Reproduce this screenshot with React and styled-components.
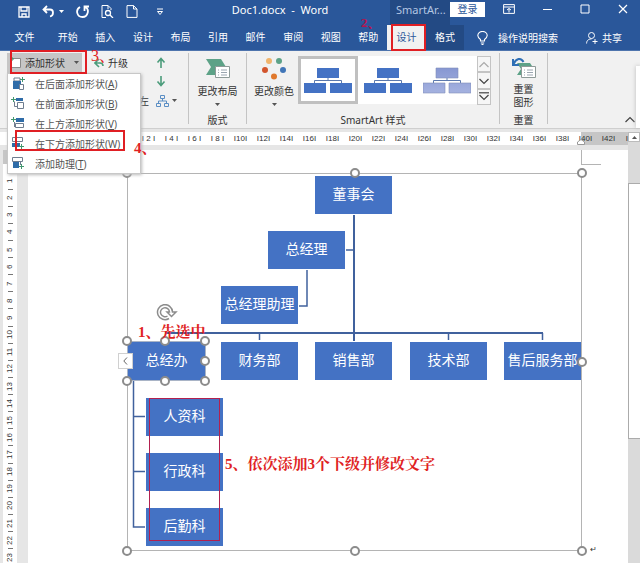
import styled, { createGlobalStyle } from 'styled-components';

const GlobalStyle = createGlobalStyle`
  * {
    box-sizing: border-box;
  }

  body {
    --color-word: #2a579a;
    --color-word-dark: #234a84;
    --color-shape: #4472c4;
    --color-line: #40619d;
    --color-mark: #e01f24;
    --ff-ui: 'Noto Sans', 'Noto Sans CJK SC', sans-serif;
    --ff-note: 'Liberation Serif', 'Noto Serif CJK SC', 'Noto Sans CJK SC', serif;
    margin: 0;
    font-family: var(--ff-ui);
    font-size: 10px;
    color: #333;
  }

  button {
    margin: 0;
    padding: 0;
    border: 0;
    background: none;
    color: inherit;
    font: inherit;
    white-space: nowrap;
  }

  svg {
    display: block;
    flex: none;
  }
`;

const StyledWindow = styled.div`
  display: flex;
  flex-direction: column;
  min-height: 100vh;
  background: #e6e6e6;
  overflow: hidden;
`;

const StyledTitleBar = styled.header`
  display: grid;
  grid-template-columns: auto 1fr auto;
  height: 25px;
  background: var(--color-word);
  color: #fff;

  .quick {
    display: flex;
    align-items: center;
    gap: 12px;
    padding: 0 0 2px 18px;
  }

  .undo {
    display: flex;
    align-items: center;
    gap: 4px;
  }

  h1 {
    margin: 0;
    font-size: 11px;
    font-weight: 400;
    line-height: 20px;
    text-align: center;
    white-space: pre;
  }

  .right {
    display: flex;
    justify-content: flex-end;
    align-items: flex-start;
  }

  .context {
    width: 60px;
    height: 25px;
    padding-left: 6px;
    background: var(--color-word-dark);
    color: #b4c6e2;
    font-size: 11px;
    line-height: 20px;
  }

  .login {
    width: 35px;
    height: 15px;
    margin: 2px 18px 0 0;
    background: #fff;
    color: var(--color-word);
    line-height: 15px;
  }

  .controls {
    display: flex;
    gap: 28px;
    padding: 4px 12px 0 0;
  }
`;

const StyledTabs = styled.nav`
  position: relative;
  display: flex;
  height: 25px;
  background: var(--color-word);
  color: #fff;

  .main {
    display: flex;
    flex: 0 1 338px;
  }

  .tools {
    display: flex;
    flex: 1;
    align-items: center;
    justify-content: space-between;
    padding: 0 18px 0 13px;
  }

  .tools button {
    display: flex;
    align-items: center;
    gap: 10px;
  }

  .tools button:last-child {
    gap: 4px;
  }
`;

const StyledTab = styled.button`
  flex: ${({ $width }) => ($width ? `0 0 ${$width}px` : '1')};
  position: relative;
  line-height: 25px;
  background: ${({ $tone }) => $tone || 'none'};
  color: ${({ $active }) => ($active ? 'var(--color-word)' : '#fff')};
`;

const StyledMark = styled.span`
  position: absolute;
  top: ${({ $top }) => $top}px;
  left: ${({ $left }) => $left}px;
  width: ${({ $width }) => $width}px;
  height: ${({ $height }) => $height}px;
  border: ${({ $thin }) => ($thin ? 1 : 2)}px solid ${({ $color }) => $color || 'var(--color-mark)'};
  pointer-events: none;
  z-index: 4;
`;

const StyledNote = styled.span`
  position: absolute;
  top: ${({ $top }) => $top}px;
  left: ${({ $left }) => $left}px;
  color: ${({ $color }) => $color || 'var(--color-mark)'};
  font-family: var(--ff-note);
  font-size: ${({ $size }) => $size || 15}px;
  font-weight: ${({ $weight }) => $weight || 700};
  line-height: 20px;
  white-space: nowrap;
  pointer-events: none;
  z-index: 4;
`;

const StyledRibbon = styled.section`
  position: relative;
  display: flex;
  height: 79px;
  padding: 2px 0 4px;
  border-top: 1px solid #4e74ad;
  border-bottom: 1px solid #cfcfcf;
  background: #f1f1f1;

  .collapse {
    margin: auto 5px 0 auto;
  }

  .pane {
    position: absolute;
    top: 15px;
    right: 0;
    bottom: 0;
    width: 4px;
    background: #fff;
    box-shadow: 0 0 4px #bbb;
  }
`;

const StyledGroup = styled.div`
  position: relative;
  display: flex;
  flex: 0 0 ${({ $width }) => $width}px;
  flex-direction: column;
  align-items: center;
  justify-content: space-between;
  border-right: 1px solid #c4c4c4;

  .label {
    color: #333;
    line-height: 8px;
  }
`;

const StyledCreate = styled.div`
  display: grid;
  grid-template-columns: 75px 1fr 16px 16px;
  grid-template-rows: repeat(3, 19px);
  align-items: center;
  width: 100%;
  padding-left: 7px;

  .add {
    display: flex;
    align-items: center;
    gap: 4px;
    height: 20px;
    padding-left: 3px;
    background: #c6c6c6;
  }

  .add svg:last-child {
    margin-left: 5px;
  }

  .promote {
    display: flex;
    align-items: center;
    gap: 4px;
    padding-left: 12px;
  }

  .direction {
    grid-column: 1 / 3;
    padding-right: 7px;
    text-align: right;
  }
`;

const StyledMenu = styled.ul`
  position: absolute;
  top: 20px;
  left: 7px;
  width: 134px;
  margin: 0;
  padding: 0;
  border: 1px solid #c8c8c8;
  background: #fff;
  box-shadow: 1px 1px 3px #bbb;
  list-style: none;
  z-index: 3;

  li {
    display: flex;
    height: 20px;
  }

  li:first-child {
    height: 19px;
  }

  button {
    display: flex;
    flex: 1;
    align-items: center;
    gap: 10px;
    padding-left: 3px;
    color: #555;
  }
`;

const StyledBigButton = styled.button`
  display: flex;
  flex-direction: column;
  align-items: center;
  padding-top: 4px;
  line-height: 13px;

  svg + span {
    margin: ${({ $tight }) => ($tight ? '3px' : '5px')} 0;
    white-space: pre-line;
  }
`;

const StyledStyles = styled.div`
  display: flex;
  align-items: flex-start;
  align-self: stretch;
  padding: 0 8px 0 7px;

  .gallery {
    display: flex;
    flex: 1;
    margin: 3px 0 0 4px;
    background: #fff;
  }

  .arrows {
    display: grid;
    grid-template-rows: repeat(3, 1fr);
    width: 14px;
    height: 49px;
    margin-top: 3px;
  }

  .arrows button {
    display: grid;
    place-items: center;
    border: 1px solid #c4c4c4;
    background: #f6f6f6;
  }
`;

const StyledPreview = styled.button`
  display: grid;
  place-items: center;
  flex: 1;
  height: 48px;
  border: 3px solid ${({ $selected }) => ($selected ? '#c0c0c0' : 'transparent')};
`;

const StyledWorkspace = styled.main`
  display: flex;
  flex: 1;
  padding-top: 3px;

  .editor {
    display: flex;
    flex: 1;
    flex-direction: column;
    min-width: 0;
  }

  .sheet-row {
    display: flex;
    flex: 1;
    margin-top: 5px;
  }
`;

const StyledRuler = styled.div`
  position: relative;
  display: flex;
  height: 13px;
  padding-left: 137px;
  background: linear-gradient(to left, #c6c6c6 47px, #fff 47px);
  color: #333;
  font-family: 'Liberation Sans', sans-serif;
  font-size: 8px;
  line-height: 14px;
  white-space: nowrap;
  overflow: hidden;

  span {
    flex: 0 0 23px;
    text-align: center;
  }

  span:last-of-type {
    flex-basis: 8px;
    text-align: right;
  }

  svg {
    position: absolute;
    right: 43px;
    bottom: 0;
  }
`;

const StyledSideRuler = styled.div`
  display: flex;
  flex-direction: column;
  justify-content: space-between;
  width: 14px;
  margin: 0 11px 0 3px;
  padding: 25px 0 0;
  background: linear-gradient(#c6c6c6 14px, #fff 14px);
  color: #333;
  font-family: 'Liberation Sans', sans-serif;
  font-size: 8px;

  span {
    height: 11px;
    line-height: 14px;
    text-align: center;
    writing-mode: vertical-rl;
    transform: rotate(180deg);
  }

  i {
    width: 5px;
    height: 1px;
    margin: 0 auto;
    background: #777;
  }
`;

const StyledPage = styled.article`
  position: relative;
  flex: 1;
  padding: 23px 46px 12px 99px;
  background: #fff;

  .corner {
    position: absolute;
    top: 0;
    right: 27px;
    width: 20px;
    height: 15px;
    border: solid #b4b4b4;
    border-width: 0 0 1px 1px;
  }

  .return {
    position: absolute;
    top: 394px;
    right: 31px;
    font-size: 8px;
    line-height: 10px;
  }
`;

const StyledCanvas = styled.div`
  position: relative;
  height: 378px;
  border: 1px solid #b4b4b4;

  .lines {
    position: absolute;
    top: -1px;
    left: -1px;
  }

  .rotate {
    position: absolute;
    top: 130px;
    left: 28px;
  }

  .toggle {
    position: absolute;
    top: 179px;
    left: -10px;
    width: 15px;
    height: 16px;
    border: 1px solid #d0d0d0;
    background: #fff;
    display: grid;
    place-items: center;
  }
`;

const StyledNode = styled.div`
  position: absolute;
  top: ${({ $top }) => $top}px;
  left: ${({ $left }) => $left}px;
  width: 77px;
  height: 38px;
  background: var(--color-shape);
  color: #fff;
  font-size: 14px;
  line-height: 36px;
  text-align: center;
  white-space: nowrap;
  outline: ${({ $selected }) => ($selected ? '1px solid #a9b4c6' : 'none')};
`;

const StyledHandle = styled.span`
  position: absolute;
  top: ${({ $y }) => $y - 6}px;
  left: ${({ $x }) => $x - 6}px;
  width: 10px;
  height: 10px;
  border: 2px solid #8c8c8c;
  border-radius: 50%;
  background: #fff;
`;

const StyledScroll = styled.aside`
  display: flex;
  flex-direction: column;
  width: 12px;
  background: #dadada;

  button {
    display: grid;
    place-items: center;
    height: 10px;
    border: 1px solid #bbb;
    background: #fff;
  }

  .thumb {
    height: 256px;
    margin-top: 41px;
    border: 1px solid #ababab;
    border-right: 0;
    background: #fff;
  }
`;

const Caret = ({ up, color = '#555' }) => (
  <svg width="5" height="3" viewBox="0 0 5 3"><path d={up ? 'M0 3h5L2.5 0z' : 'M0 0h5L2.5 3z'} fill={color} /></svg>
);

const Chevron = ({ up, bar, color = '#444' }) => (
  <svg width="10" height="9" viewBox="0 0 10 9" fill="none" stroke={color} strokeWidth="1.2">
    {bar && <path d="M0 .8h10" />}
    <path d={up ? 'M.5 7 5 2.5 9.5 7' : 'M.5 3 5 7.5 9.5 3'} />
  </svg>
);

const QuickIcon = ({ width = 13, height = 13, children, label }) => (
  <button aria-label={label}>
    <svg width={width} height={height} viewBox={`0 0 ${width} ${height}`} fill="none" stroke="#fff" strokeWidth="1.3">
      {children}
    </svg>
  </button>
);

// one small block diagram per menu command
const menuArt = [
  <g key="after"><path d="M3 1h6v3H3z" fill="#fff" stroke="#6f7d8f" /><path d="M2 4h8v8H2z" fill="#2f6ca8" /><path d="M8.5 7.5h4v5h-4z" fill="#fff" stroke="#6f7d8f" /><path d="M9 2.5h5M11.5 0v5" stroke="#43976f" /></g>,
  <g key="before"><path d="M5 2h7v3H5z" fill="#2f6ca8" /><path d="M3.5 5.5v5H6M6.5 6.5h6v6h-6z" fill="#fff" stroke="#6f7d8f" /><path d="M0 3.5h5M2.5 1v5" stroke="#43976f" /></g>,
  <g key="above"><path d="M5 2h8v4H5z" fill="#2f6ca8" /><path d="M3.5 6v5M4.5 7.5h8v4h-8z" fill="#fff" stroke="#6f7d8f" /><path d="M0 3.5h5M2.5 1v5" stroke="#43976f" /></g>,
  <g key="below"><path d="M1.5 1.5h10v4h-10z" fill="#fff" stroke="#6f7d8f" /><path d="M1 7h8v4H1z" fill="#2f6ca8" /><path d="M8 10.5h5M10.5 8v5" stroke="#43976f" /></g>,
  <g key="assistant"><path d="M1.5 1.5h10v4h-10zM9.5 6v3" fill="#fff" stroke="#6f7d8f" /><path d="M2 6h6v6H2z" fill="#2f6ca8" /><path d="M8 10.5h5M10.5 8v5" stroke="#43976f" /></g>,
];

const menuItems = [
  ['在后面添加形状', 'A'],
  ['在前面添加形状', 'B'],
  ['在上方添加形状', 'V'],
  ['在下方添加形状', 'W'],
  ['添加助理', 'T'],
];

const LayoutArt = ({ reset }) => (
  <svg width="26" height="23" viewBox="0 0 26 23">
    <path d={reset ? 'M6 6h13l4 6-4 6H6l4-6z' : 'M1 2h15l5 8-5 8H1l5-8z'} fill="#5da287" />
    <path d="M10.5 9.500h14v11h-14z" fill="#fff" stroke="#8e9a98" />
    <path d="M13 13h1M16 13h6M13 15.5h1M16 15.5h6M13 18h1M16 18h6" stroke="#9aa5b0" />
    {reset && <path d="M2 2v6h6M2.5 7C5 1.500 10 0 12.5 5" fill="none" stroke="#2f6fb5" strokeWidth="2" />}
  </svg>
);

const ColorsArt = () => (
  <svg width="26" height="23" viewBox="0 0 26 23">
    <circle cx="8" cy="4" r="3" fill="#f0b46c" />
    <circle cx="18" cy="4" r="3" fill="#5da287" />
    <circle cx="4" cy="13" r="3" fill="#d2552d" />
    <circle cx="22" cy="13" r="3" fill="#4176b8" />
    <circle cx="13" cy="19.500" r="3" fill="#e0782c" />
  </svg>
);

const PreviewArt = ({ soft }) => (
  <svg width="48" height="27" viewBox="0 0 48 27">
    <defs>
      <linearGradient id="soft" x2="0" y2="1"><stop stopColor="#8797d2" /><stop offset="1" stopColor="#a5b2e0" /></linearGradient>
    </defs>
    <path d="M24 11v3M10.5 16v-2.5h27V16" fill="none" stroke="#5b78ad" />
    <path d="M13 1h22v10H13zM0 16h22v10H0zM26 16h22v10H26z" fill={soft ? 'url(#soft)' : '#4472c4'} stroke={soft ? '#7f8db8' : 'none'} strokeWidth=".6" />
  </svg>
);

const GreenArrow = ({ down }) => (
  <svg width="10" height="11" viewBox="0 0 10 11" fill="none" stroke="#4b9c7b" strokeWidth="1.6">
    <path d={down ? 'M5 0v9M1.5 5.5 5 9.5l3.5-4' : 'M5 11V2M1.5 5.5 5 1.5l3.5 4'} />
  </svg>
);

const tabs = ['开始', '插入', '设计', '布局', '引用', '邮件', '审阅', '视图', '帮助'];

const nodes = [
  { text: '董事会', left: 187, top: 2 },
  { text: '总经理', left: 140, top: 57 },
  { text: '总经理助理', left: 93, top: 112 },
  { text: '总经办', left: 0, top: 168, selected: true },
  { text: '财务部', left: 93, top: 168 },
  { text: '销售部', left: 187, top: 168 },
  { text: '技术部', left: 282, top: 168 },
  { text: '售后服务部', left: 376, top: 168 },
  { text: '人资科', left: 18, top: 224 },
  { text: '行政科', left: 18, top: 279 },
  { text: '后勤科', left: 18, top: 334 },
];

const handles = [
  [0, 0], [228, 0], [455, 0], [455, 189], [0, 378], [228, 378], [455, 378],
  [0, 168], [38, 168], [78, 168], [78, 188], [0, 208], [38, 208], [78, 208],
];

const range = (from, to, step = 1) => Array.from({ length: (to - from) / step + 1 }, (_, i) => from + i * step);

const TitleBar = () => (
  <StyledTitleBar>
    <div className="quick">
      <QuickIcon label="保存" width={12} height={12}>
        <path d="M1 1h10v10H1zM3 1v4h6V1M4 11V8h4v3" />
      </QuickIcon>
      <div className="undo">
        <QuickIcon label="撤消" width={13}>
          <path d="M5 1 1.5 4.5 5 8M2 4.5h6c4 0 4 6 0 7" strokeWidth="1.8" />
        </QuickIcon>
        <Caret color="#fff" />
      </div>
      <QuickIcon label="重做">
        <path d="M4 2C-1 5 1 12 6.5 12S14 4 9 2M8.5 6V1.5H13" strokeWidth="1.8" />
      </QuickIcon>
      <QuickIcon label="打印预览">
        <path d="M5 12.5H1V.5h6l3 3V5M7 .5V4" strokeWidth="1" />
        <circle cx="7" cy="8" r="2.5" />
        <path d="m9 10 3 3" />
      </QuickIcon>
      <QuickIcon label="新建" width={12}>
        <path d="M1 .6h6.5L11 4v8.4H1zM7.5.6V4H11" strokeWidth="1" />
      </QuickIcon>
      <QuickIcon label="自定义" width={20} height={8}>
        <path d="M7 1h6M7.5 3.5h5L10 6.5z" strokeWidth="1" />
      </QuickIcon>
    </div>
    <h1>{'Doc1.docx  -  Word'}</h1>
    <div className="right">
      <span className="context">SmartAr...</span>
      <button className="login">登录</button>
      <div className="controls">
        <QuickIcon label="功能区显示选项" width={12} height={10}>
          <path d="M.6.6h10.8v8.8H.6zM.6 3h10.8M6 8.5V4.5M4 6l2-1.5L8 6" strokeWidth="1" />
        </QuickIcon>
        <QuickIcon label="最小化" width={9} height={10}><path d="M0 5.5h9" strokeWidth="1" /></QuickIcon>
        <QuickIcon label="最大化" width={10} height={10}><path d="M1 1h8v8H1z" strokeWidth="1" /></QuickIcon>
        <QuickIcon label="关闭" width={10} height={10}><path d="m1 1 8 8M9 1 1 9" strokeWidth="1.2" /></QuickIcon>
      </div>
    </div>
  </StyledTitleBar>
);

const Tabs = () => (
  <StyledTabs>
    <StyledTab $width={49}>文件</StyledTab>
    <div className="main">
      {tabs.map((tab) => <StyledTab key={tab}>{tab}</StyledTab>)}
    </div>
    <StyledTab $width={39} $tone="#f1f1f1" $active>
      设计
      <StyledMark $top={-1} $left={4} $width={35} $height={27} />
    </StyledTab>
    <StyledTab $width={38} $tone="var(--color-word-dark)">格式</StyledTab>
    <div className="tools">
      <button>
        <svg width="11" height="14" viewBox="0 0 11 14" fill="none" stroke="#fff" strokeWidth="1.1">
          <path d="M3.5 10V8.5C1.5 7 .8 6 .8 4.6a4.7 4.2 0 0 1 9.4 0C10.2 6 9.5 7 7.5 8.500V10zM3.8 12h3.4M4.5 13.5h2" />
        </svg>
        操作说明搜索
      </button>
      <button>
        <svg width="12" height="12" viewBox="0 0 12 12" fill="none" stroke="#fff">
          <circle cx="5.5" cy="3.5" r="3" />
          <path d="M.6 11.5C.6 8 3 7 5.5 7M9 7v5M6.5 9.5h5" />
        </svg>
        共享
      </button>
    </div>
    <StyledNote $top={-12} $left={361} $size={13} $color="#b3124d">2、</StyledNote>
  </StyledTabs>
);

const Ribbon = () => (
  <StyledRibbon>
    <StyledGroup $width={189}>
      <StyledCreate>
        <button className="add">
          <svg width="11" height="11" viewBox="0 0 11 11"><path d="M1.5 1.5h9v9h-9z" fill="#fff" stroke="#8b8b8b" /><path d="M0 2h4M2 0v4" stroke="#43976f" /></svg>
          添加形状
          <Caret />
        </button>
        <button className="promote">
          <svg width="10" height="10" viewBox="0 0 10 10" fill="none" stroke="#4b9c7b" strokeWidth="1.6"><path d="M5 1 1 5l4 4M1 5h5c2 0 3 1 3 3" /></svg>
          升级
        </button>
        <button aria-label="上移"><GreenArrow /></button>
        <span />
        <span />
        <span />
        <button aria-label="下移"><GreenArrow down /></button>
        <span />
        <button className="direction">从右向左</button>
        <button aria-label="组织结构图布局">
          <svg width="13" height="12" viewBox="0 0 13 12" fill="none" stroke="#5b8ec4">
            <path d="M4.5.5h4v3h-4zM.5 8.5h4v3h-4zM8.5 8.5h4v3h-4zM6.5 3.5V6M2.5 8.5V6h8v2.5" />
          </svg>
        </button>
        <Caret />
      </StyledCreate>
      <StyledMenu>
        {menuItems.map(([text, key], i) => (
          <li key={key}>
            <button>
              <svg width="14" height="14" viewBox="0 0 14 14">{menuArt[i]}</svg>
              <span>{text}(<u>{key}</u>)</span>
            </button>
          </li>
        ))}
      </StyledMenu>
      <StyledMark $top={-3} $left={10} $width={77} $height={24} />
      <StyledMark $top={77} $left={15} $width={110} $height={21} />
      <StyledNote $top={-7} $left={91} $size={16} $weight={400}>3、</StyledNote>
      <StyledNote $top={85} $left={134}>4、</StyledNote>
    </StyledGroup>

    <StyledGroup $width={58}>
      <StyledBigButton>
        <LayoutArt />
        <span>更改布局</span>
        <Caret />
      </StyledBigButton>
      <span className="label">版式</span>
    </StyledGroup>

    <StyledGroup $width={253}>
      <StyledStyles>
        <StyledBigButton>
          <ColorsArt />
          <span>更改颜色</span>
          <Caret />
        </StyledBigButton>
        <div className="gallery">
          <StyledPreview $selected aria-label="简单填充"><PreviewArt /></StyledPreview>
          <StyledPreview aria-label="白色轮廓"><PreviewArt /></StyledPreview>
          <StyledPreview aria-label="细微效果"><PreviewArt soft /></StyledPreview>
        </div>
        <div className="arrows">
          <button aria-label="上一行"><Chevron up color="#aaa" /></button>
          <button aria-label="下一行"><Chevron /></button>
          <button aria-label="其他"><Chevron bar /></button>
        </div>
      </StyledStyles>
      <span className="label">SmartArt 样式</span>
    </StyledGroup>

    <StyledGroup $width={48}>
      <StyledBigButton $tight>
        <LayoutArt reset />
        <span>{'重置\n图形'}</span>
      </StyledBigButton>
      <span className="label">重置</span>
    </StyledGroup>

    <button className="collapse" aria-label="折叠功能区"><Chevron up /></button>
    <div className="pane" />
  </StyledRibbon>
);

const Chart = () => (
  <StyledCanvas>
    <svg className="lines" width="456" height="378" viewBox="0 0 456 378" fill="none" stroke="var(--color-line)">
      <path d="M227 42v126M38 160h378" strokeWidth="2" />
      <path d="M219 77h7M180 97v36h-8M132.5 160v7M321.5 160v7M415.5 160v7" strokeWidth="1.5" />
      <path d="M6.5 208v146H18M6.5 243.5H18M6.5 298.5H18" strokeWidth="1.5" />
    </svg>
    {nodes.map(({ text, left, top, selected }) => (
      <StyledNode key={text} $left={left} $top={top} $selected={selected}>{text}</StyledNode>
    ))}
    {handles.map(([x, y]) => <StyledHandle key={`${x}-${y}`} $x={x} $y={y} />)}
    <svg className="rotate" width="22" height="18" viewBox="0 0 22 18" fill="none" stroke="#8c8c8c" strokeWidth="1.5">
      <path d="M13 14.5A7.5 7.5 0 1 1 16.5 8H20l-4.5 4.5L11 8h2.5A4.5 4.5 0 1 0 11.5 12" />
    </svg>
    <button className="toggle" aria-label="文本窗格">
      <svg width="5" height="8" viewBox="0 0 5 8" fill="none" stroke="#666"><path d="M4 .5.8 4 4 7.5" /></svg>
    </button>
    <StyledMark $top={224} $left={21} $width={71} $height={143} $color="#b3204f" $thin />
    <StyledNote $top={148} $left={10}>1、先选中</StyledNote>
    <StyledNote $top={280} $left={97}>5、依次添加3个下级并修改文字</StyledNote>
  </StyledCanvas>
);

const App = () => (
  <>
    <GlobalStyle />
    <StyledWindow>
      <TitleBar />
      <Tabs />
      <Ribbon />
      <StyledWorkspace>
        <div className="editor">
          <StyledRuler>
            {range(2, 42, 2).map((n) => <span key={n}>{n < 10 ? `I ${n} I` : `I${n}I`}</span>)}
            <span>I</span>
            <svg width="8" height="6" viewBox="0 0 8 6"><path d="M.5 5.5V3L4 .5 7.5 3v2.5z" fill="#fff" stroke="#999" /></svg>
          </StyledRuler>
          <div className="sheet-row">
            <StyledSideRuler>
              {range(1, 23).flatMap((n) => [<span key={n}>{n}</span>, n < 23 && <i key={`t${n}`} />])}
            </StyledSideRuler>
            <StyledPage>
              <span className="corner" />
              <Chart />
              <span className="return">↵</span>
            </StyledPage>
          </div>
        </div>
        <StyledScroll>
          <button aria-label="向上滚动"><Caret up /></button>
          <div className="thumb" />
        </StyledScroll>
      </StyledWorkspace>
    </StyledWindow>
  </>
);

export default App;
